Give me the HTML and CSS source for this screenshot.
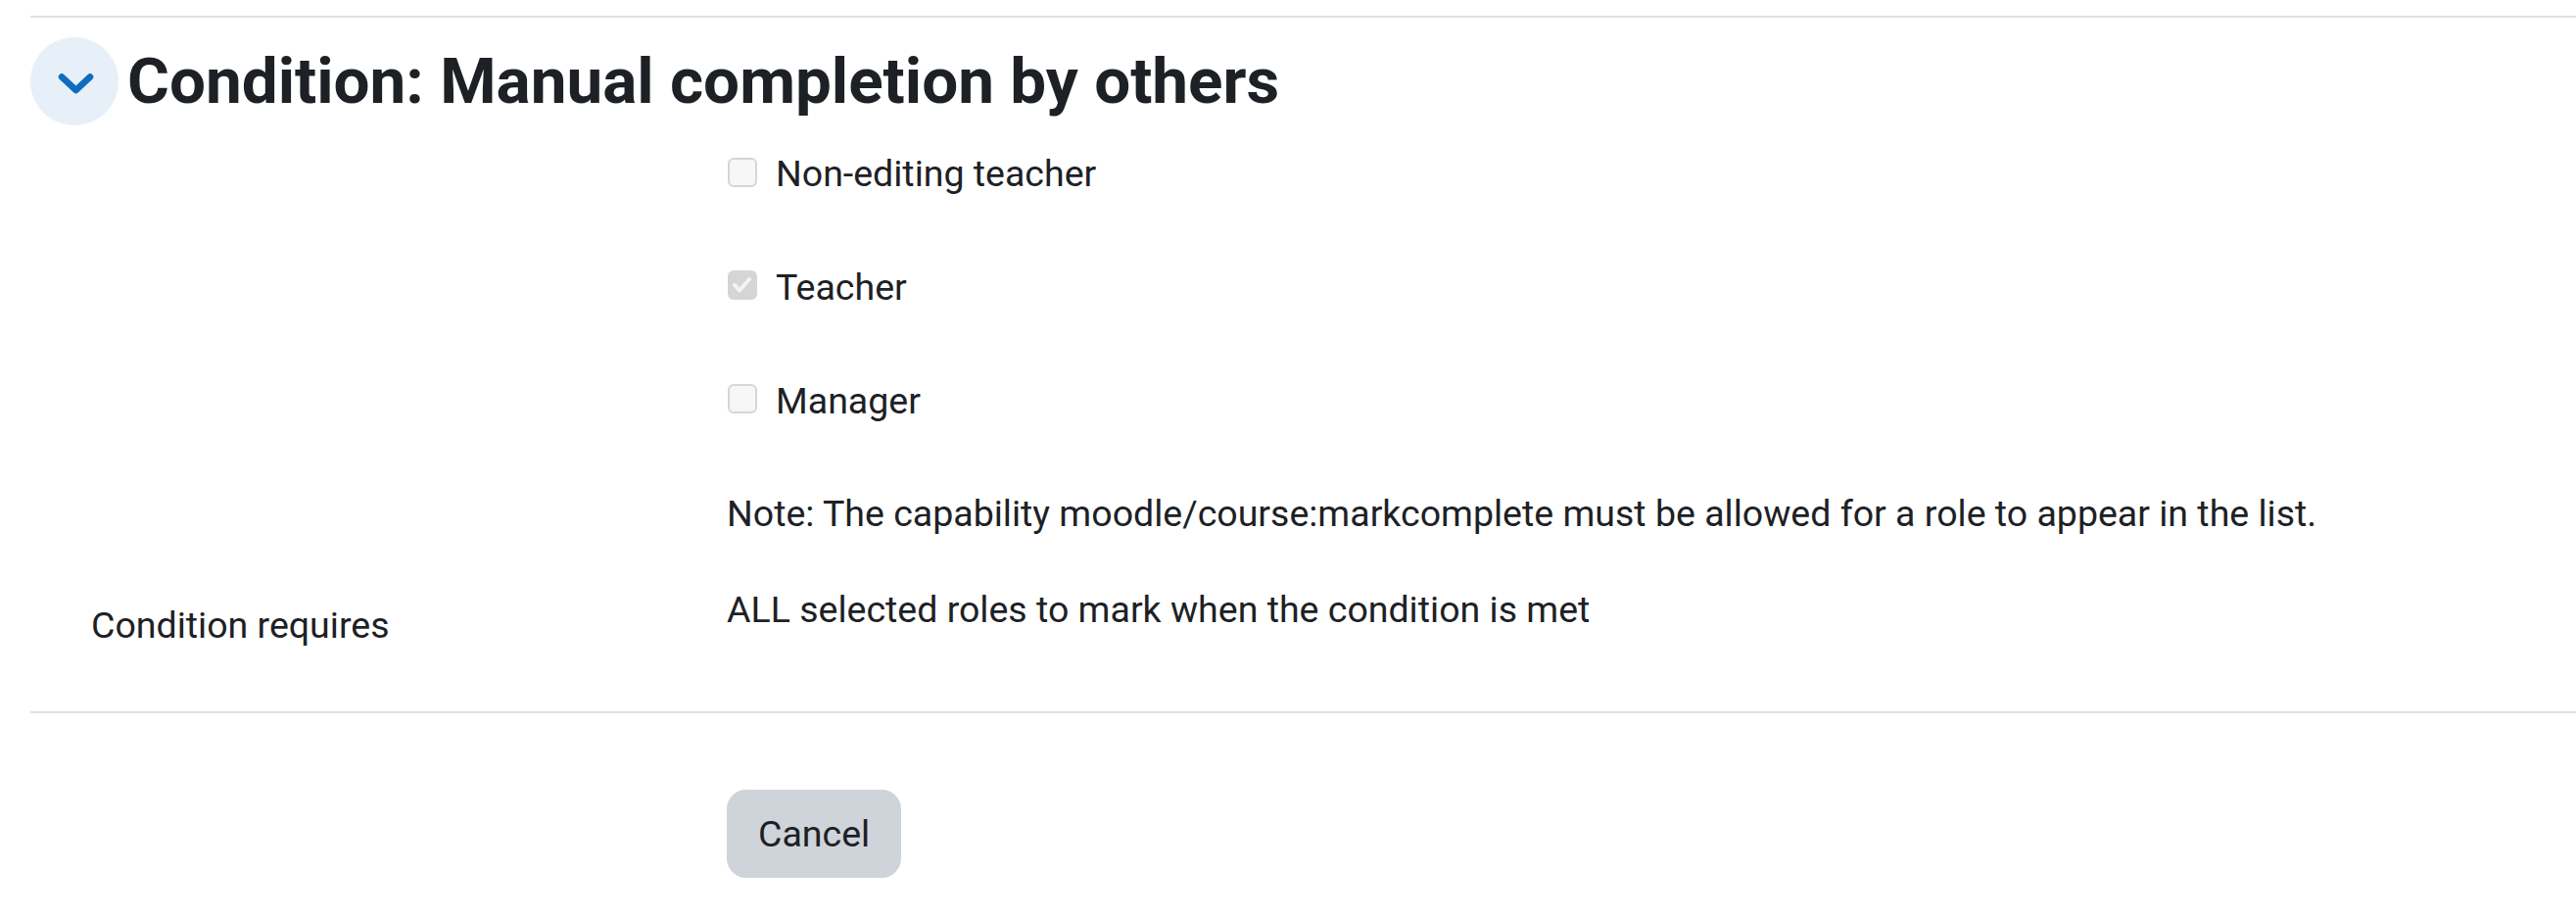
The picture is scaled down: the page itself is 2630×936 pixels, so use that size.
FILE: index.html
```html
<!DOCTYPE html>
<html lang="en">
<head>
<meta charset="utf-8">
<title>Condition: Manual completion by others</title>
<link rel="stylesheet" href="styles.css">
</head>
<body>
<div class="page">
  <div class="section">
    <div class="section-head">
      <span class="toggle">
        <svg class="chev" width="90" height="90" viewBox="0 0 90 90" aria-hidden="true">
          <polyline points="32,40.5 46.5,54 61,40.5" fill="none" stroke="#0f6cbf" stroke-width="6.5" stroke-linecap="round" stroke-linejoin="round"/>
        </svg>
      </span>
      <h3 class="section-title">Condition: Manual completion by others</h3>
    </div>
    <div class="fields">
      <div class="frow">
        <div class="flabel"></div>
        <div class="fcontrol">
          <label class="check"><span class="box"></span><span>Non-editing teacher</span></label>
        </div>
      </div>
      <div class="frow">
        <div class="flabel"></div>
        <div class="fcontrol">
          <label class="check"><span class="box checked"><svg width="29" height="29" viewBox="0 0 29 29" aria-hidden="true"><polyline points="7,15 12,20.5 22,9" fill="none" stroke="#f4f4f4" stroke-width="4" stroke-linecap="round" stroke-linejoin="round"/></svg></span><span>Teacher</span></label>
        </div>
      </div>
      <div class="frow">
        <div class="flabel"></div>
        <div class="fcontrol">
          <label class="check"><span class="box"></span><span>Manager</span></label>
        </div>
      </div>
      <div class="frow note-row">
        <div class="flabel"></div>
        <div class="fcontrol">Note: The capability moodle/course:markcomplete must be allowed for a role to appear in the list.</div>
      </div>
      <div class="frow static-row">
        <div class="flabel static-label">Condition requires</div>
        <div class="fcontrol">ALL selected roles to mark when the condition is met</div>
      </div>
    </div>
  </div>
  <div class="actions">
    <div class="flabel"></div>
    <div class="fcontrol"><button type="button" class="btn">Cancel</button></div>
  </div>
</div>
</body>
</html>
```
FILE: styles.css
```css
html, body {
  margin: 0;
  padding: 0;
  background: #ffffff;
}
body {
  font-family: Roboto, "Liberation Sans", Arial, sans-serif;
  font-size: 37.5px;
  line-height: 56.25px;
  color: #1d2125;
}
.page {
  padding: 16px 0 0 31px;
}
.section {
  border-top: 2px solid #dee2e6;
  border-bottom: 2px solid #dee2e6;
  padding-bottom: 60px;
}
.section-head {
  display: flex;
  align-items: center;
  margin-top: 20px;
}
.toggle {
  width: 90px;
  height: 90px;
  border-radius: 50%;
  background: #e7eff8;
  display: flex;
  flex: none;
}
.chev {
  display: block;
}
.section-title {
  margin: 0 0 0 9px;
  font-size: 65.6px;
  line-height: 78.75px;
  font-weight: 700;
  color: #1d2125;
}
.fields {
  padding-top: 21px;
}
.frow {
  display: grid;
  grid-template-columns: 711px 1fr;
  margin-bottom: 59.5px;
}
.frow.note-row {
  margin-bottom: 41px;
}
.frow.static-row {
  margin-bottom: 0;
}
.flabel {
  padding-left: 62px;
}
.static-label {
  padding-top: 16px;
}
.check {
  display: flex;
  align-items: flex-start;
  gap: 19px;
}
.box {
  box-sizing: border-box;
  width: 30px;
  height: 30px;
  margin-top: 11.5px;
  margin-left: 1px;
  border: 2.5px solid #d6d6d6;
  border-radius: 6px;
  background: #f7f7f7;
  flex: none;
  position: relative;
}
.box.checked {
  background: #d5d5d5;
  border-color: #d5d5d5;
}
.box.checked svg {
  position: absolute;
  left: -2px;
  top: -2px;
}
.actions {
  display: grid;
  grid-template-columns: 711px 1fr;
  margin-top: 78px;
}
.btn {
  font-family: Roboto, "Liberation Sans", Arial, sans-serif;
  font-size: 37.5px;
  line-height: 56.25px;
  color: #1d2125;
  background: #ced4da;
  border: 2.5px solid #ced4da;
  border-radius: 20px;
  padding: 15px 30px;
  margin: 0;
  height: 90px;
  cursor: pointer;
}
```
